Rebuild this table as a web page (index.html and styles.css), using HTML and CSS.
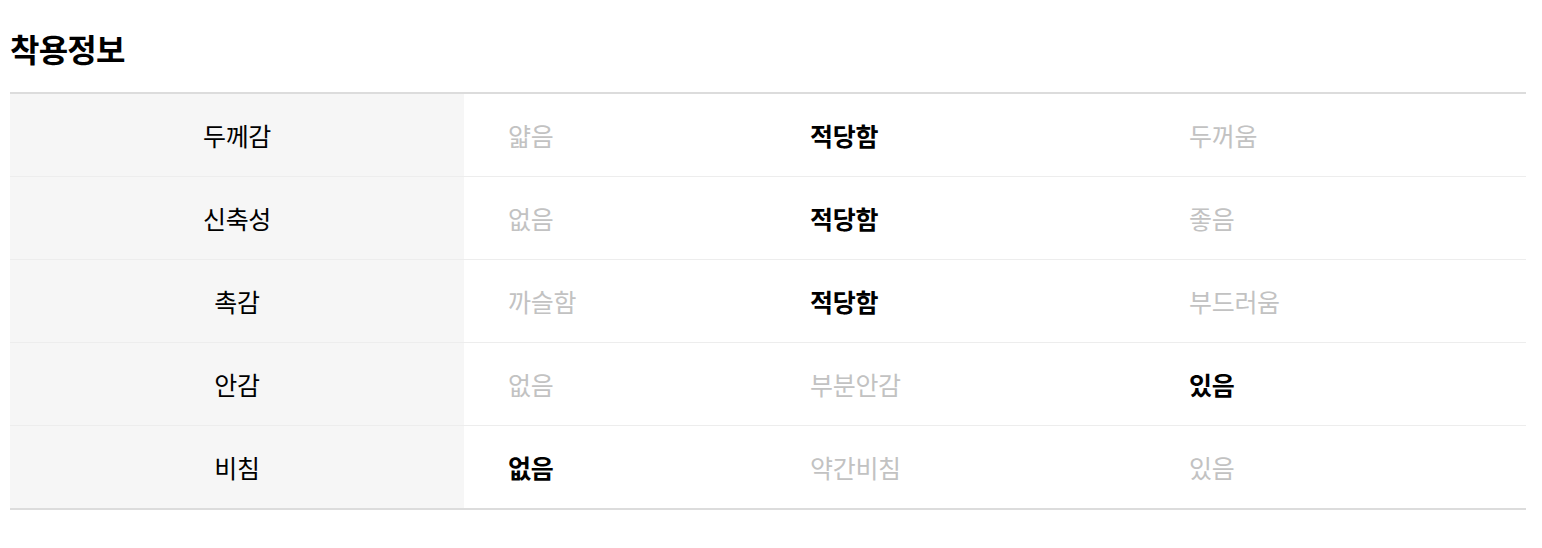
FILE: index.html
```html
<!DOCTYPE html>
<html lang="ko">
<head>
<meta charset="utf-8">
<link rel="stylesheet" href="styles.css">
</head>
<body>
<section class="wear">
  <h2 class="title">착용정보</h2>
  <table class="info">
    <colgroup>
      <col class="c-label"><col class="c-1"><col class="c-2"><col class="c-3">
    </colgroup>
    <tbody>
      <tr><th>두께감</th><td>얇음</td><td class="on">적당함</td><td>두꺼움</td></tr>
      <tr><th>신축성</th><td>없음</td><td class="on">적당함</td><td>좋음</td></tr>
      <tr><th>촉감</th><td>까슬함</td><td class="on">적당함</td><td>부드러움</td></tr>
      <tr><th>안감</th><td>없음</td><td>부분안감</td><td class="on">있음</td></tr>
      <tr><th>비침</th><td class="on">없음</td><td>약간비침</td><td>있음</td></tr>
    </tbody>
  </table>
</section>
</body>
</html>
```

FILE: styles.css
```css
html, body {
  margin: 0;
  padding: 0;
  background: #fff;
}
body {
  font-family: "Noto Sans CJK KR", "Noto Sans", sans-serif;
  color: #000;
}
.wear {
  padding: 0 16px 0 10px;
}
.title {
  margin: 0;
  padding-top: 26px;
  height: 64px;
  box-sizing: border-box;
  font-size: 32px;
  line-height: 44px;
  font-weight: 700;
  letter-spacing: -0.8px;
}
.info {
  width: 1516px;
  margin-top: 28px;
  border-collapse: collapse;
  table-layout: fixed;
  border-top: 2px solid #dcdcdc;
  border-bottom: 2px solid #dcdcdc;
}
.c-label { width: 454px; }
.c-1 { width: 302px; }
.c-2 { width: 379px; }
.c-3 { width: 381px; }
.info tr + tr th,
.info tr + tr td {
  border-top: 1px solid #ededed;
}
.info th {
  height: 82px;
  padding: 0;
  background: #f6f6f6;
  font-weight: 400;
  font-size: 25px;
  text-align: center;
  color: #000;
  letter-spacing: -0.3px;
}
.info td {
  height: 82px;
  padding: 0 0 0 44px;
  font-size: 25px;
  color: #c2c2c2;
  text-align: left;
  letter-spacing: -0.3px;
}
.info td.on {
  color: #000;
  font-weight: 700;
}
```
